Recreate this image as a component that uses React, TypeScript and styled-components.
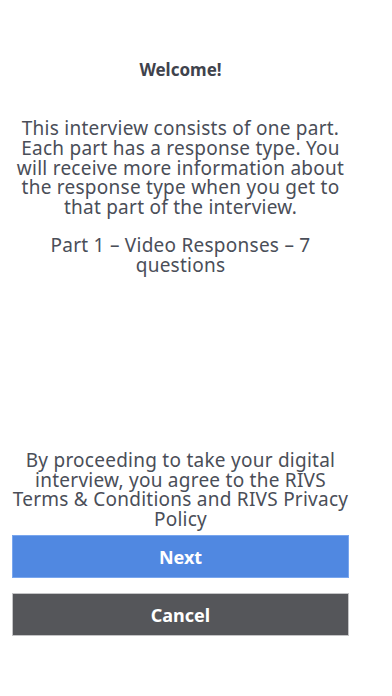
import styled, { createGlobalStyle } from "styled-components";

const GlobalStyle = createGlobalStyle`
  html, body {
    margin: 0;
    padding: 0;
    background: #ffffff;
  }
  body {
    font-family: "Noto Sans", "Liberation Sans", sans-serif;
  }
`;

const Page = styled.div`
  width: 361px;
  height: 696px;
  box-sizing: border-box;
  padding: 60px 12px 60px 12px;
  display: flex;
  flex-direction: column;
  color: #4a4e58;
  text-align: center;
`;

const Title = styled.h1`
  margin: 0;
  font-size: 17px;
  line-height: 20px;
  font-weight: 700;
  color: #3f434d;
`;

const Paragraph = styled.p<{ gap?: number }>`
  margin: ${({ gap }) => gap ?? 0}px 0 0;
  font-size: 19px;
  line-height: 19.8px;
  letter-spacing: 0.25px;
  font-weight: 400;
`;

const Spacer = styled.div`
  flex: 1;
`;

const Actions = styled.div`
  display: flex;
  flex-direction: column;
  gap: 15px;
  margin-top: 5px;
`;

const Button = styled.button<{ variant: "primary" | "secondary" }>`
  height: 43px;
  width: 100%;
  border: 1px solid
    ${({ variant }) => (variant === "primary" ? "#79a6ee" : "#c4c4c6")};
  background: ${({ variant }) =>
    variant === "primary" ? "#5088e1" : "#55565a"};
  color: #ffffff;
  font-family: inherit;
  font-size: 18px;
  font-weight: 700;
  cursor: pointer;
`;

export default function App() {
  return (
    <>
      <GlobalStyle />
      <Page>
        <Title>Welcome!</Title>
        <Paragraph gap={39}>
          This interview consists of one part. Each part has a response type.
          You will receive more information about the response type when you
          get to that part of the interview.
        </Paragraph>
        <Paragraph gap={18}>Part 1 – Video Responses – 7 questions</Paragraph>
        <Spacer />
        <Paragraph>
          By proceeding to take your digital interview, you agree to the RIVS
          Terms &amp; Conditions and RIVS Privacy Policy
        </Paragraph>
        <Actions>
          <Button variant="primary">Next</Button>
          <Button variant="secondary">Cancel</Button>
        </Actions>
      </Page>
    </>
  );
}
